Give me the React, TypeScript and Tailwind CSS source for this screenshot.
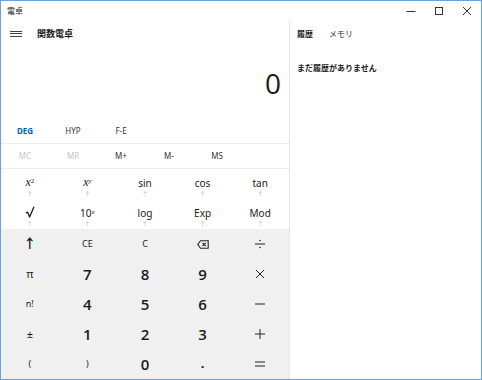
import React from 'react';

const sans = 'font-["Noto_Sans","Noto_Sans_CJK_JP",sans-serif]';

// thin operator glyphs drawn as strokes
const Op = ({ kind }: { kind: string }) => (
  <svg width="12" height="12" viewBox="0 0 12 12" fill="none" stroke="#222" strokeWidth="1">
    {kind === 'div' && (
      <>
        <line x1="1" y1="6" x2="11" y2="6" />
        <circle cx="6" cy="2.5" r="0.8" fill="#222" stroke="none" />
        <circle cx="6" cy="9.5" r="0.8" fill="#222" stroke="none" />
      </>
    )}
    {kind === 'mul' && (
      <>
        <line x1="2" y1="2" x2="10" y2="10" />
        <line x1="10" y1="2" x2="2" y2="10" />
      </>
    )}
    {kind === 'sub' && <line x1="1" y1="6" x2="11" y2="6" />}
    {kind === 'add' && (
      <>
        <line x1="1" y1="6" x2="11" y2="6" />
        <line x1="6" y1="1" x2="6" y2="11" />
      </>
    )}
    {kind === 'eq' && (
      <>
        <line x1="1" y1="4" x2="11" y2="4" />
        <line x1="1" y1="8" x2="11" y2="8" />
      </>
    )}
  </svg>
);

const Backspace = () => (
  <svg width="12" height="9" viewBox="0 0 12 9" fill="none" stroke="#222" strokeWidth="1.1">
    <path d="M3.5 0.8 H11.2 V8.2 H3.5 L0.8 4.5 Z" />
    <line x1="5.5" y1="2.8" x2="8.8" y2="6.2" />
    <line x1="8.8" y1="2.8" x2="5.5" y2="6.2" />
  </svg>
);

const Root = () => (
  <svg width="10" height="12" viewBox="0 0 10 12" fill="none" stroke="#1a1a1a" strokeWidth="1.3" strokeLinejoin="round">
    <path d="M0.8 7 L2.6 6.2 L4.6 11 L9 0.8" />
  </svg>
);

const Shift = () => <span className="text-[6px] leading-none text-[#b5b5b5] mt-[3px]">↑</span>;

const FuncKey = ({ children }: { children: React.ReactNode }) => (
  <button className="h-[30px] flex flex-col items-center justify-end pb-[2px] bg-white">
    <span className="text-[10px] leading-none text-[#1a1a1a] h-[12px] flex items-end">{children}</span>
    <Shift />
  </button>
);

const Italic = ({ base, sup, supItalic = true }: { base: string; sup: string; supItalic?: boolean }) => (
  <span className="font-['Liberation_Serif',serif] text-[12px] leading-none">
    <i>{base}</i>
    <sup className={`text-[7px] ${supItalic ? 'italic' : ''}`}>{sup}</sup>
  </span>
);

const lower: { label: React.ReactNode; digit?: boolean }[][] = [
  [
    { label: <span className="text-[13px] font-bold">↑</span> },
    { label: <span className="text-[9px]">CE</span> },
    { label: <span className="text-[9px]">C</span> },
    { label: <Backspace /> },
    { label: <Op kind="div" /> },
  ],
  [
    { label: <span className="text-[11px]">π</span> },
    { label: '7', digit: true },
    { label: '8', digit: true },
    { label: '9', digit: true },
    { label: <Op kind="mul" /> },
  ],
  [
    { label: <span className="text-[9px]">n!</span> },
    { label: '4', digit: true },
    { label: '5', digit: true },
    { label: '6', digit: true },
    { label: <Op kind="sub" /> },
  ],
  [
    { label: <span className="text-[11px]">±</span> },
    { label: '1', digit: true },
    { label: '2', digit: true },
    { label: '3', digit: true },
    { label: <Op kind="add" /> },
  ],
  [
    { label: <span className="text-[9px]">(</span> },
    { label: <span className="text-[9px]">)</span> },
    { label: '0', digit: true },
    { label: <span className="text-[13px] font-bold">.</span> },
    { label: <Op kind="eq" /> },
  ],
];

export default function App() {
  return (
    <div className={`w-[482px] h-[380px] border border-[#6aa4dc] bg-white flex flex-col overflow-hidden text-[#1a1a1a] ${sans}`}>
      {/* title bar */}
      <div className="h-[19px] flex items-center shrink-0">
        <span className="pl-[6px] text-[8px] leading-none">電卓</span>
        <div className="ml-auto flex h-full">
          <div className="w-[28px] flex items-center justify-center">
            <svg width="10" height="10" viewBox="0 0 10 10" stroke="#333" strokeWidth="1"><line x1="0.5" y1="5.5" x2="9.5" y2="5.5" /></svg>
          </div>
          <div className="w-[28px] flex items-center justify-center">
            <svg width="10" height="10" viewBox="0 0 10 10" fill="none" stroke="#333" strokeWidth="1"><rect x="1.5" y="1.5" width="7" height="7" /></svg>
          </div>
          <div className="w-[28px] flex items-center justify-center">
            <svg width="10" height="10" viewBox="0 0 10 10" stroke="#333" strokeWidth="1"><line x1="1" y1="1" x2="9" y2="9" /><line x1="9" y1="1" x2="1" y2="9" /></svg>
          </div>
        </div>
      </div>

      <div className="flex flex-1 min-h-0">
        {/* calculator */}
        <div className="w-[288px] flex flex-col">
          <div className="h-[27px] flex items-center shrink-0">
            <div className="w-[36px] flex flex-col items-center gap-[1.5px] pr-[6px]">
              <span className="block w-[12px] h-px bg-[#444]" />
              <span className="block w-[12px] h-px bg-[#444]" />
              <span className="block w-[12px] h-px bg-[#444]" />
            </div>
            <span className="text-[9px] font-bold leading-none">関数電卓</span>
          </div>

          <div className="h-[71px] flex items-center justify-end pr-[8px] shrink-0">
            <span className="text-[28px] leading-none font-['Open_Sans',sans-serif] font-normal">0</span>
          </div>

          <div className="h-[25px] flex items-center shrink-0">
            <span className="w-[48px] text-center text-[8px] font-bold text-[#0063b1]">DEG</span>
            <span className="w-[48px] text-center text-[8px] text-[#333]">HYP</span>
            <span className="w-[48px] text-center text-[8px] text-[#333]">F-E</span>
          </div>

          <div className="h-[25px] flex items-center border-t border-[#ececec] shrink-0">
            <span className="w-[48px] text-center text-[8px] text-[#c4c4c4]">MC</span>
            <span className="w-[48px] text-center text-[8px] text-[#c4c4c4]">MR</span>
            <span className="w-[48px] text-center text-[8px] text-[#333]">M+</span>
            <span className="w-[48px] text-center text-[8px] text-[#333]">M-</span>
            <span className="w-[48px] text-center text-[8px] text-[#333]">MS</span>
          </div>

          <div className="grid grid-cols-5 border-t border-[#ececec] shrink-0">
            <FuncKey><Italic base="x" sup="2" supItalic={false} /></FuncKey>
            <FuncKey><Italic base="x" sup="y" /></FuncKey>
            <FuncKey>sin</FuncKey>
            <FuncKey>cos</FuncKey>
            <FuncKey>tan</FuncKey>
            <FuncKey><Root /></FuncKey>
            <FuncKey>
              <span>10<sup className="text-[7px] italic font-['Liberation_Serif',serif]">x</sup></span>
            </FuncKey>
            <FuncKey>log</FuncKey>
            <FuncKey>Exp</FuncKey>
            <FuncKey>Mod</FuncKey>
          </div>

          <div className="flex-1 grid grid-cols-5 grid-rows-5 bg-[#f0f0f0]">
            {lower.flat().map((k, i) => (
              <button key={i} className="flex items-center justify-center">
                {k.digit ? (
                  <span className="text-[15px] font-semibold font-['Open_Sans',sans-serif] leading-none">{k.label}</span>
                ) : (
                  k.label
                )}
              </button>
            ))}
          </div>
        </div>

        <div className="w-px bg-[#e6e6e6]" />

        {/* history panel */}
        <div className="flex-1 flex flex-col pl-[7px]">
          <div className="h-[27px] flex items-center gap-[16px]">
            <span className="text-[8px] font-bold leading-none">履歴</span>
            <span className="text-[8px] leading-none text-[#333]">メモリ</span>
          </div>
          <div className="mt-[17px] text-[8px] font-bold leading-none">まだ履歴がありません</div>
        </div>
      </div>
    </div>
  );
}
